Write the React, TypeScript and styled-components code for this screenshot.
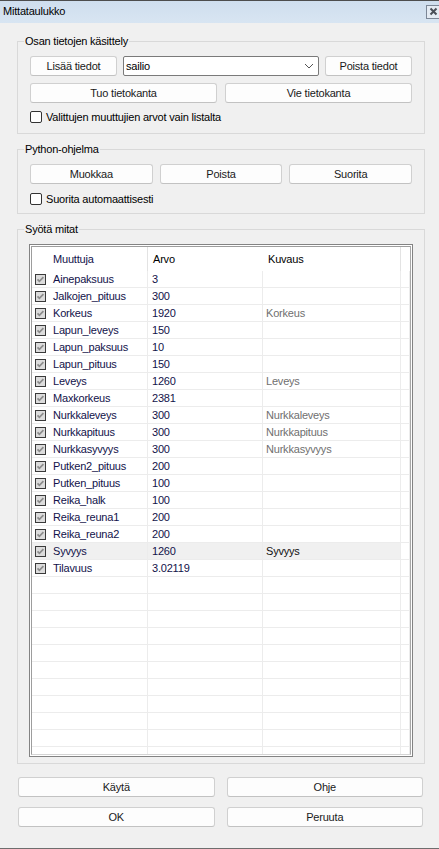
import React from 'react';
import styled, { createGlobalStyle } from 'styled-components';

const Global = createGlobalStyle`
  html, body { margin: 0; padding: 0; background: #f0f0f0; }
  body {
    font-family: "Liberation Sans", Arial, sans-serif;
    font-size: 11px;
    letter-spacing: -0.2px;
    color: #000;
  }
  * { box-sizing: border-box; }
`;

const Window = styled.div`
  width: 439px;
  height: 849px;
  background: #f0f0f0;
  border-bottom: 1px solid #6e6e6e;
  display: flex;
  flex-direction: column;
  overflow: hidden;
`;

const TitleBar = styled.div`
  height: 23px;
  flex: none;
  border-top: 1px solid #4d4d4d;
  background: linear-gradient(#cfdeee, #d8e5f2);
  display: flex;
  align-items: center;
  justify-content: space-between;
  padding-left: 3px;
`;

const Title = styled.span`
  font-size: 11px;
  line-height: 14px;
  margin-top: -2px;
`;

const CloseBox = styled.div`
  width: 13px;
  height: 14px;
  margin-top: -1px;
  border: 1px solid #7c8797;
  border-right: none;
  background: #e4ebf3;
  display: flex;
  align-items: center;
  justify-content: center;
`;

const Content = styled.div`
  flex: 1;
  display: flex;
  flex-direction: column;
  padding: 18px 14px 0 17px;
`;

const GroupBox = styled.div<{ $pt: number; $pb: number; $mt: number; $px: number }>`
  position: relative;
  margin-top: ${p => p.$mt}px;
  border: 1px solid #d9d9d9;
  padding: ${p => p.$pt}px ${p => p.$px}px ${p => p.$pb}px ${p => p.$px}px;
  display: flex;
  flex-direction: column;
`;

const Legend = styled.span`
  position: absolute;
  top: -7px;
  left: 6px;
  padding: 0 1px;
  background: #f0f0f0;
  line-height: 13px;
`;

const Row = styled.div<{ $cols: string; $gap: number; $mb?: number }>`
  display: grid;
  grid-template-columns: ${p => p.$cols};
  column-gap: ${p => p.$gap}px;
  margin-bottom: ${p => p.$mb ?? 0}px;
`;

const Button = styled.div`
  height: 20px;
  border: 1px solid #d0d0d0;
  border-bottom-color: #c2c2c2;
  border-radius: 3px;
  background: #fdfdfd;
  display: flex;
  align-items: center;
  justify-content: center;
  line-height: 14px;
  color: #1a1a1a;
`;

const Combo = styled.div`
  height: 20px;
  border: 1px solid #7a7a7a;
  border-radius: 2px;
  background: #fff;
  display: flex;
  align-items: center;
  justify-content: space-between;
  padding: 0 4px 0 2px;
`;

const CheckLine = styled.label`
  display: flex;
  align-items: center;
  gap: 4px;
  height: 12px;
  line-height: 13px;
`;

const Box = styled.span`
  width: 12px;
  height: 12px;
  border: 1px solid #333;
  border-radius: 2px;
  background: #fff;
  flex: none;
`;

const TableFrame = styled.div`
  height: 513px;
  border: 1px solid #838383;
  padding: 1px;
  background: #fff;
`;

const TableInner = styled.div`
  height: 100%;
  border: 1px solid #9d9d9d;
  border-right-color: #a8a8a8;
  border-bottom-color: #d4d4d4;
  overflow: hidden;
  display: flex;
  flex-direction: column;
`;

const COLS = '116px 115px 138px 1fr';

const HeaderRow = styled.div`
  display: grid;
  grid-template-columns: ${COLS};
  height: 24px;
  flex: none;
`;

const HeaderCell = styled.div<{ $pl: number; $color?: string; $sep?: boolean }>`
  display: flex;
  align-items: center;
  padding-left: ${p => p.$pl}px;
  color: ${p => p.$color ?? '#000'};
  border-right: 1px solid ${p => (p.$sep ? '#e3e3e3' : 'transparent')};
`;

const BodyRow = styled.div<{ $sel?: boolean }>`
  display: grid;
  grid-template-columns: ${COLS};
  height: 17px;
  flex: none;
  border-bottom: 1px solid #ececec;
  background: ${p => (p.$sel ? '#f0f0f0' : '#fff')};
`;

const Cell = styled.div<{ $pl: number; $color?: string; $bg?: string }>`
  display: flex;
  align-items: center;
  gap: 7px;
  padding-left: ${p => p.$pl}px;
  border-right: 1px solid #ececec;
  color: ${p => p.$color ?? '#12124a'};
  white-space: nowrap;
  overflow: hidden;
  ${p => (p.$bg ? `background: ${p.$bg};` : '')}
`;

const BottomGrid = styled.div`
  display: grid;
  grid-template-columns: 1fr 1fr;
  column-gap: 12px;
  row-gap: 10px;
  margin: 13px 2px 0 1px;
`;

const TableCheck = () => (
  <svg width="11" height="11" viewBox="0 0 11 11" style={{ flex: 'none' }}>
    <rect x="0.5" y="0.5" width="10" height="10" fill="#dcdcdc" stroke="#3a3a3a" />
    <path d="M2.5 5.3 L4.4 7.3 L8.4 3.2" fill="none" stroke="#8c8c8c" strokeWidth="1.7" />
  </svg>
);

const rows: [string, string, string][] = [
  ['Ainepaksuus', '3', ''],
  ['Jalkojen_pituus', '300', ''],
  ['Korkeus', '1920', 'Korkeus'],
  ['Lapun_leveys', '150', ''],
  ['Lapun_paksuus', '10', ''],
  ['Lapun_pituus', '150', ''],
  ['Leveys', '1260', 'Leveys'],
  ['Maxkorkeus', '2381', ''],
  ['Nurkkaleveys', '300', 'Nurkkaleveys'],
  ['Nurkkapituus', '300', 'Nurkkapituus'],
  ['Nurkkasyvyys', '300', 'Nurkkasyvyys'],
  ['Putken2_pituus', '200', ''],
  ['Putken_pituus', '100', ''],
  ['Reika_halk', '100', ''],
  ['Reika_reuna1', '200', ''],
  ['Reika_reuna2', '200', ''],
  ['Syvyys', '1260', 'Syvyys'],
  ['Tilavuus', '3.02119', ''],
];

const EMPTY = 12;

export default function App() {
  return (
    <>
      <Global />
      <Window>
        <TitleBar>
          <Title>Mittataulukko</Title>
          <CloseBox>
            <svg width="9" height="9" viewBox="0 0 9 9">
              <path d="M1.5 1.5 L7.5 7.5 M7.5 1.5 L1.5 7.5" stroke="#4a4f57" strokeWidth="2" />
            </svg>
          </CloseBox>
        </TitleBar>
        <Content>
          <GroupBox $mt={0} $pt={14} $pb={10} $px={12}>
            <Legend>Osan tietojen käsittely</Legend>
            <Row $cols="87px 1fr 87px" $gap={6} $mb={7}>
              <Button>Lisää tiedot</Button>
              <Combo>
                <span>sailio</span>
                <svg width="10" height="6" viewBox="0 0 10 6">
                  <path d="M1 1 L5 5 L9 1" fill="none" stroke="#555" strokeWidth="1" />
                </svg>
              </Combo>
              <Button>Poista tiedot</Button>
            </Row>
            <Row $cols="1fr 1fr" $gap={8} $mb={8}>
              <Button>Tuo tietokanta</Button>
              <Button>Vie tietokanta</Button>
            </Row>
            <CheckLine>
              <Box />
              <span>Valittujen muuttujien arvot vain listalta</span>
            </CheckLine>
          </GroupBox>

          <GroupBox $mt={15} $pt={14} $pb={8} $px={12}>
            <Legend>Python-ohjelma</Legend>
            <Row $cols="1fr 1fr 1fr" $gap={7} $mb={9}>
              <Button>Muokkaa</Button>
              <Button>Poista</Button>
              <Button>Suorita</Button>
            </Row>
            <CheckLine>
              <Box />
              <span>Suorita automaattisesti</span>
            </CheckLine>
          </GroupBox>

          <GroupBox $mt={15} $pt={14} $pb={6} $px={11}>
            <Legend>Syötä mitat</Legend>
            <TableFrame>
              <TableInner>
                <HeaderRow>
                  <HeaderCell $pl={21} $color="#12124a" $sep>Muuttuja</HeaderCell>
                  <HeaderCell $pl={5}>Arvo</HeaderCell>
                  <HeaderCell $pl={5} $sep>Kuvaus</HeaderCell>
                  <HeaderCell $pl={0} />
                </HeaderRow>
                {rows.map(([name, val, desc]) => {
                  const sel = name === 'Syvyys';
                  return (
                    <BodyRow key={name} $sel={sel}>
                      <Cell $pl={3}>
                        <TableCheck />
                        <span>{name}</span>
                      </Cell>
                      <Cell $pl={4}>{val}</Cell>
                      <Cell $pl={3} $color={sel ? '#111' : '#6f6f6f'}>{desc}</Cell>
                      <Cell $pl={0} $bg="#fff" />
                    </BodyRow>
                  );
                })}
                {Array.from({ length: EMPTY }).map((_, i) => (
                  <BodyRow key={'e' + i}>
                    <Cell $pl={0} />
                    <Cell $pl={0} />
                    <Cell $pl={0} />
                    <Cell $pl={0} />
                  </BodyRow>
                ))}
              </TableInner>
            </TableFrame>
          </GroupBox>

          <BottomGrid>
            <Button>Käytä</Button>
            <Button>Ohje</Button>
            <Button>OK</Button>
            <Button>Peruuta</Button>
          </BottomGrid>
        </Content>
      </Window>
    </>
  );
}
